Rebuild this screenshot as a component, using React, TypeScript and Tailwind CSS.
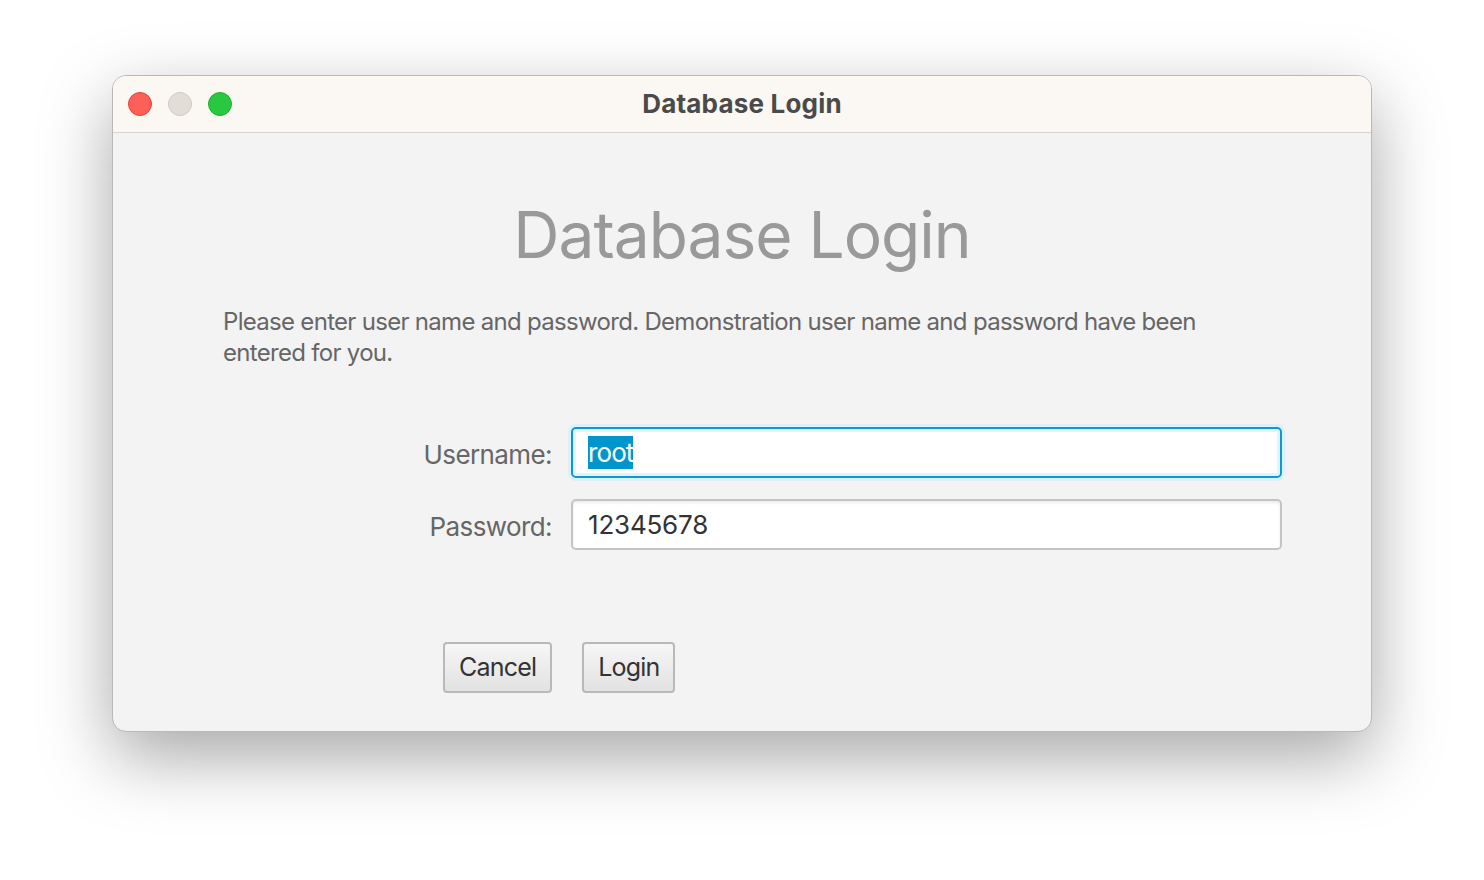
import React from "react";

const font = { fontFamily: "Inter, 'Noto Sans', sans-serif" };

const Field = ({ label, value, focused }: { label: string; value: string; focused?: boolean }) => (
  <div className="flex items-center">
    <div className="w-[458px] pr-[19px] pt-[3px] text-right text-[26px] text-[#666] tracking-[-0.6px]">{label}</div>
    <div
      className={
        focused
          ? "h-[51px] w-[711px] rounded-[5px] border-2 border-[#0a9ad6] bg-white shadow-[0_0_0_3px_#dcf0f9,inset_0_0_0_3px_#e3f3fa] flex items-center px-[15px]"
          : "h-[51px] w-[711px] rounded-[5px] border-2 border-[#c4c4c4] bg-white flex items-center px-[15px] shadow-[inset_0_2px_3px_rgba(0,0,0,0.08)]"
      }
    >
      {focused ? (
        <span className="bg-[#0095cc] text-white text-[26px] leading-[33px] tracking-[-0.9px]">{value}</span>
      ) : (
        <span className="text-[#333] text-[26px] tracking-[-0.2px]">{value}</span>
      )}
    </div>
  </div>
);

const Button = ({ children }: { children: React.ReactNode }) => (
  <button className="h-[51px] rounded-[4px] border-2 border-[#b9b9b9] bg-gradient-to-b from-[#f6f6f6] to-[#e2e2e2] px-[14px] text-[25px] text-[#333] tracking-[-0.8px]">
    {children}
  </button>
);

export default function App() {
  return (
    <div className="w-[1484px] h-[880px] bg-white pt-[75px] pl-[112px]" style={font}>
      <div className="w-[1260px] h-[657px] rounded-[14px] overflow-hidden border border-[#b8b8b8] bg-[#f3f3f3] shadow-[0_25px_70px_rgba(0,0,0,0.35)] flex flex-col">
        <div className="h-[57px] bg-[#fbf7f2] border-b border-[#d6d3d0] flex items-center relative">
          <div className="flex gap-[16px] pl-[15px]">
            <div className="w-[24px] h-[24px] rounded-full bg-[#fe5f57] border border-[#e0443e]" />
            <div className="w-[24px] h-[24px] rounded-full bg-[#e2ddd7] border border-[#cfc9c2]" />
            <div className="w-[24px] h-[24px] rounded-full bg-[#2ac840] border border-[#1fae2e]" />
          </div>
          <div className="absolute inset-0 flex items-center justify-center pb-[2px] text-[26px] font-bold text-[#4a4a4a] tracking-[0.2px]">
            Database Login
          </div>
        </div>
        <div className="flex-1 flex flex-col">
          <div className="text-center text-[64px] text-[#999] tracking-[-1px] mt-[62px] leading-[80px]">Database Login</div>
          <p className="pl-[110px] mt-[31px] text-[24px] leading-[31px] text-[#666] tracking-[-0.7px] w-[1110px]">
            Please enter user name and password. Demonstration user name and password have been entered for you.
          </p>
          <div className="flex flex-col gap-[21px] mt-[59px]">
            <Field label="Username:" value="root" focused />
            <Field label="Password:" value="12345678" />
          </div>
          <div className="flex gap-[30px] pl-[330px] mt-[92px]">
            <Button>Cancel</Button>
            <Button>Login</Button>
          </div>
        </div>
      </div>
    </div>
  );
}
